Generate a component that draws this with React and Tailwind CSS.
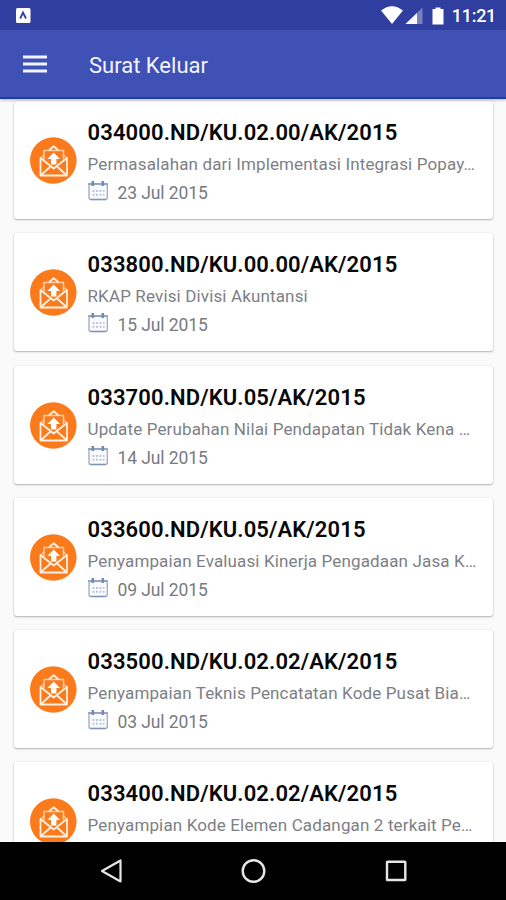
import React from 'react';

const letters = [
  { number: '034000.ND/KU.02.00/AK/2015', subject: 'Permasalahan dari Implementasi Integrasi Popay…', date: '23 Jul 2015' },
  { number: '033800.ND/KU.00.00/AK/2015', subject: 'RKAP Revisi Divisi Akuntansi', date: '15 Jul 2015' },
  { number: '033700.ND/KU.05/AK/2015', subject: 'Update Perubahan Nilai Pendapatan Tidak Kena …', date: '14 Jul 2015' },
  { number: '033600.ND/KU.05/AK/2015', subject: 'Penyampaian Evaluasi Kinerja Pengadaan Jasa K…', date: '09 Jul 2015' },
  { number: '033500.ND/KU.02.02/AK/2015', subject: 'Penyampaian Teknis Pencatatan Kode Pusat Bia…', date: '03 Jul 2015' },
  { number: '033400.ND/KU.02.02/AK/2015', subject: 'Penyampian Kode Elemen Cadangan 2 terkait Pe…' },
];

function OutboxIcon() {
  return (
    <svg className="size-[47px] shrink-0" viewBox="0 0 47 47" fill="none">
      <circle cx="23.3" cy="23.5" r="23.3" fill="#fb7b1c" />
      <g stroke="#fff1e4" strokeWidth="1.8" strokeLinejoin="round">
        <path d="M10.500 21v17.500H37V21L23.700 31.500z" />
        <path d="M11 38l9.500-8.500M36.500 38L27 29.500" />
        <path d="M10.500 21l3.500-3M37 21l-3.500-3" strokeOpacity=".6" strokeWidth="1.400" />
        <path d="M14 22.500v-9h19.500v9" strokeOpacity=".7" strokeWidth="1.500" />
        <path d="M19 13.200l4.700-3.900 4.700 3.900" />
      </g>
      <path d="M23.700 15.500l6.300 6.500h-3.600v5.500h-5.400V22h-3.600z" fill="#fff" />
    </svg>
  );
}

function CalendarIcon() {
  return (
    <svg className="-ml-px h-[21px] w-[22px] shrink-0" viewBox="0 0 22 21" fill="none" stroke="#8293b5">
      <rect x="2" y="4" width="18.300" height="15.500" rx="2" strokeWidth="1.400" fill="#fafbff" stroke="#a3aeca" />
      <path d="M1 4h20" stroke="#8c9dbd" strokeWidth="1.600" />
      <path d="M5.800 1v5M15.800 1v5" stroke="#768baf" strokeWidth="2.600" />
      <path d="M5.500 11h12M5.500 14.800h12" strokeWidth="2" strokeDasharray="2 1.500" stroke="#bcc6da" />
      <path d="M3.500 19.500h15.500" strokeWidth="1.300" />
    </svg>
  );
}

function LetterCard({ number, subject, date }) {
  return (
    <article className="flex h-[118px] shrink-0 rounded-[3px] bg-white pl-4 shadow-[0_1px_2px_rgba(0,0,0,0.28),0_0_2px_rgba(0,0,0,0.10)]">
      <div className="pt-[36px]"><OutboxIcon /></div>
      <div className="ml-[11px] flex flex-col whitespace-nowrap">
        <h2 className="mt-[18px] h-[28px] text-[22px] leading-[28px] font-semibold tracking-[0.12px] text-[#080808]">{number}</h2>
        <p className="mt-[6px] h-[22px] text-[17px] leading-[22px] tracking-[0.14px] text-[#7c8085]">{subject}</p>
        {date && (
          <div className="mt-[5px] flex h-[24px] items-start">
            <CalendarIcon />
            <span className="ml-[9px] pt-[2px] text-[17.5px] leading-[22px] tracking-[-0.1px] text-[#777b80]">{date}</span>
          </div>
        )}
      </div>
    </article>
  );
}

export default function App() {
  return (
    <div className="flex h-[900px] w-[506px] flex-col overflow-hidden bg-[#fafafa] font-['Roboto',sans-serif]">
      <header className="z-10 shrink-0 shadow-[0_1px_3px_rgba(0,0,0,0.3)]">
        <div className="flex h-[30px] items-center justify-between bg-[#303f9f] pr-[10px] pl-[16px] text-white">
          <svg className="size-[15px]" viewBox="0 0 15 15">
            <rect width="14.500" height="15" rx="1.500" fill="#fff" />
            <path d="M4.200 10.500L7 4.500l3 6" fill="none" stroke="#303f9f" strokeWidth="1.800" />
          </svg>
          <div className="flex items-center">
            <svg className="mr-[5px] h-[20px] w-[63px]" viewBox="0 0 63 20" fill="#fff">
              <path d="M0 5.500Q11-3 22 5.500L11 19z" />
              <path d="M24.500 19L41.500 2.500V19z" fillOpacity=".35" />
              <path d="M24.500 19L36 8v11z" />
              <path d="M51.500 4h3V2.500h5V4h3v15.500h-11z" />
            </svg>
            <span className="ml-[3px] pt-[2px] text-[18px] leading-none font-medium tracking-[-0.3px]">11:21</span>
          </div>
        </div>
        <div className="flex h-[69px] items-center border-b-2 border-[#1f3ca0] bg-[#3f51b5] pl-[23px]">
          <svg className="h-[18px] w-[24px]" viewBox="0 0 24 18" fill="none" stroke="#f2f4ff" strokeWidth="2.800">
            <path d="M0 2h24M0 9h24M0 16h24" />
          </svg>
          <h1 className="ml-[42px] pt-[5px] text-[22px] leading-none text-[#f2f4ff]">Surat Keluar</h1>
        </div>
      </header>
      <main className="flex min-h-0 flex-1 flex-col gap-[14.200px] overflow-hidden px-[13.500px] pt-[2.200px]">
        {letters.map((letter) => <LetterCard key={letter.number} {...letter} />)}
      </main>
      <nav className="z-10 flex h-[58px] shrink-0 items-center justify-between bg-black pr-[98px] pl-[100px]">
        <svg className="h-[26px] w-[24px]" viewBox="0 0 24 26" fill="none" stroke="#e6e6e6" strokeWidth="2.200">
          <path d="M2 13L20.500 2.500v21z" strokeLinejoin="round" />
        </svg>
        <svg className="size-[26px]" viewBox="0 0 26 26" fill="none" stroke="#e6e6e6" strokeWidth="2.400">
          <circle cx="12.500" cy="13" r="10.800" />
        </svg>
        <svg className="size-[24px]" viewBox="0 0 24 24" fill="none" stroke="#e6e6e6" strokeWidth="2.400">
          <rect x="3" y="2.700" width="18.300" height="18.300" rx=".5" />
        </svg>
      </nav>
    </div>
  );
}
